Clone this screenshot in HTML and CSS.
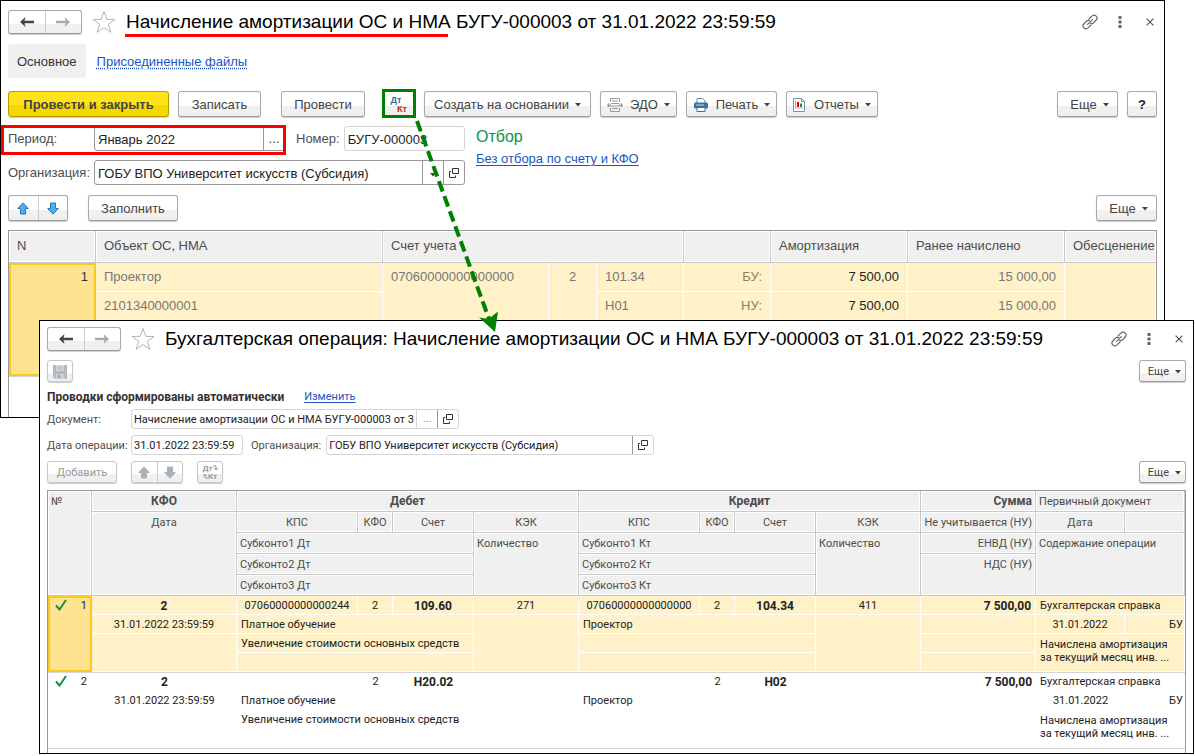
FILE: index.html
```html
<!DOCTYPE html>
<html lang="ru">
<head>
<meta charset="utf-8">
<title>Начисление амортизации ОС и НМА</title>
<link rel="stylesheet" href="styles.css">
</head>
<body>
<svg class="defs" aria-hidden="true">
  <symbol id="i-left" viewBox="0 0 14 10"><path d="M0 5 5.500 0 4.500 3.700H14V6.300H4.500L5.500 10Z" fill="currentColor"/></symbol>
  <symbol id="i-right" viewBox="0 0 14 10"><path d="M14 5 8.500 0 9.500 3.700H0V6.300H9.500L8.500 10Z" fill="currentColor"/></symbol>
  <symbol id="i-star" viewBox="0 0 24 24"><path d="M12 1.500 14.700 9.300 23 9.500 16.400 14.300 18.800 22.300 12 17.600 5.200 22.300 7.600 14.300 1 9.500 9.300 9.300Z" fill="#fff" stroke="#b4b4b4"/></symbol>
  <symbol id="i-link" viewBox="0 0 16 16"><g fill="none" stroke="#666" stroke-width="1.200" stroke-linecap="round"><path d="M7 5 10.200 1.900C12.800-.4 16.800 3.300 14.200 6L11.600 8.800C10.500 9.800 9.400 9.800 8.600 9.400"/><path d="M9 11 5.800 14.100C3.200 16.400-.8 12.700 1.800 10L4.400 7.200C5.500 6.200 6.600 6.200 7.400 6.600"/><path d="M5.600 10.400 10.400 5.600"/></g></symbol>
  <symbol id="i-dots" viewBox="0 0 4 12"><path d="M.5 0h3v3h-3zM.5 4.500h3v3h-3zM.5 9h3v3h-3z" fill="#666"/></symbol>
  <symbol id="i-close" viewBox="0 0 8 8"><path d="M.6.6 7.400 7.400M7.400.6.6 7.400" stroke="#555" stroke-width="1.200"/></symbol>
  <symbol id="i-up" viewBox="0 0 12 13"><path d="M6 .8 11.300 6.500H8.500V12H3.500V6.500H.7Z" fill="currentColor" stroke="var(--edge)"/></symbol>
  <symbol id="i-down" viewBox="0 0 12 13"><path d="M6 12.200 11.300 6.500H8.500V1H3.500V6.500H.7Z" fill="currentColor" stroke="var(--edge)"/></symbol>
  <symbol id="i-open" viewBox="0 0 10 10"><path d="M3.500.5h6v5h-6zM2 3.500H.5v6h6V7.500" fill="none" stroke="#333"/></symbol>
  <symbol id="i-caret" viewBox="0 0 6 4"><path d="M0 0h6L3 3.500Z" fill="#444"/></symbol>
  <symbol id="i-check" viewBox="0 0 12 12"><path d="M1 6.500 4.500 10.500 11 1" fill="none" stroke="#0a9646" stroke-width="2"/></symbol>
</svg>

<main class="desktop">
  <section class="window window-back">
    <header class="titlebar">
      <div class="group nav"><button aria-label="Назад"><svg class="arrow"><use href="#i-left"/></svg></button><button aria-label="Вперед" class="dim"><svg class="arrow"><use href="#i-right"/></svg></button></div>
      <svg class="star"><use href="#i-star"/></svg>
      <h1>Начисление амортизации ОС и НМА БУГУ-000003 от 31.01.2022 23:59:59</h1>
      <div class="wintools"><svg class="link-i"><use href="#i-link"/></svg><svg class="dots-i"><use href="#i-dots"/></svg><svg class="close-i"><use href="#i-close"/></svg></div>
    </header>
    <nav class="tabs"><span class="tab">Основное</span><a href="#files">Присоединенные файлы</a></nav>
    <div class="toolbar">
      <button class="btn primary">Провести и закрыть</button>
      <button class="btn w-write">Записать</button>
      <button class="btn w-post">Провести</button>
      <button class="btn dtkt"><span class="dt">Дт</span><span class="kt">Кт</span></button>
      <button class="btn w-create">Создать на основании <svg class="caret"><use href="#i-caret"/></svg></button>
      <button class="btn w-edo"><svg class="ico" viewBox="0 0 16 14"><path d="M3.500 4V.5h9V4M3.500 10v3.500h9V10M5 3h6M4 5.500h8M4 8h8M5 10.500h6" fill="none" stroke="#999"/><path d="M4 7H2V5L0 7.500 2 9V8h2M12 7h2V5l2 2.500L14 9V8h-2" fill="#999" stroke="#999" stroke-width=".5"/></svg>ЭДО <svg class="caret"><use href="#i-caret"/></svg></button>
      <button class="btn w-print"><svg class="ico" viewBox="0 0 16 14"><path d="M4 5V.5h5.500L12 3v2" fill="#fff" stroke="#6d89a5"/><rect x="1" y="4.500" width="14" height="6" rx="1.500" fill="#3e6f9e"/><path d="M4 9.500h8v4H4z" fill="#fff" stroke="#3e6f9e"/><path d="M3 7h8" stroke="#c9dcec"/></svg>Печать <svg class="caret"><use href="#i-caret"/></svg></button>
      <button class="btn w-report"><svg class="ico narrow" viewBox="0 0 12 14"><path d="M.5.5h8l3 3v10H.5z" fill="#fff" stroke="#7f8fa3"/><path d="M8.500.5v3h3" fill="none" stroke="#7f8fa3"/><path d="M2.500 3v7H10" fill="none" stroke="#aab"/><path d="M4 4h2v5H4z" fill="#f00000"/><path d="M7 5.500h2V9H7z" fill="#159a2c"/></svg>Отчеты <svg class="caret"><use href="#i-caret"/></svg></button>
      <button class="btn w-more push">Еще <svg class="caret"><use href="#i-caret"/></svg></button>
      <button class="btn w-help">?</button>
    </div>
    <div class="form">
      <div class="fields">
        <div class="line">
          <label class="lead" for="period">Период:</label>
          <div class="field f-period"><input id="period" value="Январь 2022"><button>...</button></div>
          <label class="second" for="number">Номер:</label>
          <div class="field soft f-number"><input id="number" value="БУГУ-000003"></div>
        </div>
        <div class="line">
          <label class="lead" for="org">Организация:</label>
          <div class="field f-org"><input id="org" value="ГОБУ ВПО Университет искусств (Субсидия)"><button aria-label="Выбрать"><svg class="caret"><use href="#i-caret"/></svg></button><button aria-label="Открыть"><svg class="open-i"><use href="#i-open"/></svg></button></div>
        </div>
      </div>
      <div class="filter"><h2>Отбор</h2><a href="#filter">Без отбора по счету и КФО</a></div>
    </div>
    <div class="toolbar lower">
      <div class="group move"><button aria-label="Вверх"><svg class="ud"><use href="#i-up"/></svg></button><button aria-label="Вниз"><svg class="ud"><use href="#i-down"/></svg></button></div>
      <button class="btn w-fill">Заполнить</button>
      <button class="btn w-more push">Еще <svg class="caret"><use href="#i-caret"/></svg></button>
    </div>
    <table class="assets">
      <colgroup><col class="a0"><col class="a2"><col class="a3"><col class="a4"><col class="a1"><col class="a1"><col class="a5"><col class="a6"><col></colgroup>
      <thead><tr><th>N</th><th>Объект ОС, НМА</th><th colspan="3">Счет учета</th><th></th><th>Амортизация</th><th>Ранее начислено</th><th>Обесценение</th></tr></thead>
      <tbody class="sel">
        <tr><td rowspan="3" class="cur r">1</td><td>Проектор</td><td rowspan="3">07060000000000000</td><td rowspan="3" class="c">2</td><td>101.34</td><td class="r unit">БУ:</td><td class="r dark">7 500,00</td><td class="r">15 000,00</td><td rowspan="3"></td></tr>
        <tr><td>2101340000001</td><td>Н01</td><td class="r unit">НУ:</td><td class="r dark">7 500,00</td><td class="r">15 000,00</td></tr>
        <tr class="tall"><td></td><td></td><td></td><td></td><td></td></tr>
      </tbody>
      <tbody class="rest"><tr><td colspan="9"></td></tr></tbody>
    </table>
  </section>

  <section class="window window-front">
    <header class="titlebar">
      <div class="group nav"><button aria-label="Назад"><svg class="arrow"><use href="#i-left"/></svg></button><button aria-label="Вперед" class="dim"><svg class="arrow"><use href="#i-right"/></svg></button></div>
      <svg class="star"><use href="#i-star"/></svg>
      <h1>Бухгалтерская операция: Начисление амортизации ОС и НМА БУГУ-000003 от 31.01.2022 23:59:59</h1>
      <div class="wintools"><svg class="link-i"><use href="#i-link"/></svg><svg class="dots-i"><use href="#i-dots"/></svg><svg class="close-i"><use href="#i-close"/></svg></div>
    </header>
    <div class="toolbar save-row">
      <button class="btn icon off" aria-label="Записать"><svg class="disk" viewBox="0 0 14 14"><path d="M0 0h14v14H2L0 12Z" fill="#b3bbc0"/><path d="M3 0h8v6H3z" fill="#d3d8db"/><path d="M4 2h6M4 4h6" stroke="#b3bbc0"/><path d="M3 9h8v5H3z" fill="#c9cfd2"/><path d="M5 10h2v3H5z" fill="#9aa4aa"/></svg></button>
      <button class="btn w-more push">Еще <svg class="caret"><use href="#i-caret"/></svg></button>
    </div>
    <p class="note"><b>Проводки сформированы автоматически</b><a href="#edit">Изменить</a></p>
    <div class="line">
      <label class="lead" for="doc">Документ:</label>
      <div class="field soft f-doc"><input id="doc" value="Начисление амортизации ОС и НМА БУГУ-000003 от 3"><button class="pale">...</button><button aria-label="Открыть"><svg class="open-i"><use href="#i-open"/></svg></button></div>
    </div>
    <div class="line">
      <label class="lead" for="date">Дата операции:</label>
      <div class="field soft f-date"><input id="date" value="31.01.2022 23:59:59"></div>
      <label class="second" for="org2">Организация:</label>
      <div class="field soft f-org2"><input id="org2" value="ГОБУ ВПО Университет искусств (Субсидия)"><button aria-label="Открыть"><svg class="open-i"><use href="#i-open"/></svg></button></div>
    </div>
    <div class="toolbar">
      <button class="btn w-add off">Добавить</button>
      <div class="group move off"><button aria-label="Вверх"><svg class="ud"><use href="#i-up"/></svg></button><button aria-label="Вниз"><svg class="ud"><use href="#i-down"/></svg></button></div>
      <button class="btn icon dtkt off"><span class="dt">Дт<svg viewBox="0 0 5 6"><path d="M0 1h3v3M1 3l2 2 2-2" fill="none" stroke="#999"/></svg></span><span class="kt"><svg viewBox="0 0 5 6"><path d="M5 5H2V2M0 3l2-2 2 2" fill="none" stroke="#999"/></svg>Кт</span></button>
      <button class="btn w-more push">Еще <svg class="caret"><use href="#i-caret"/></svg></button>
    </div>
    <table class="entries">
      <colgroup><col class="e1"><col class="e2"><col class="e3"><col class="e4"><col class="e5"><col class="e6"><col class="e3"><col class="e4"><col class="e5"><col class="e6"><col class="e7"><col class="e8"><col></colgroup>
      <thead>
        <tr><th rowspan="5" class="l">№</th><th class="strong">КФО</th><th colspan="4" class="strong">Дебет</th><th colspan="4" class="strong">Кредит</th><th class="strong r">Сумма</th><th colspan="2" class="l">Первичный документ</th></tr>
        <tr><th rowspan="4">Дата</th><th>КПС</th><th>КФО</th><th>Счет</th><th>КЭК</th><th>КПС</th><th>КФО</th><th>Счет</th><th>КЭК</th><th class="r">Не учитывается (НУ)</th><th>Дата</th><th></th></tr>
        <tr><th colspan="3" class="l">Субконто1 Дт</th><th rowspan="3" class="l">Количество</th><th colspan="3" class="l">Субконто1 Кт</th><th rowspan="3" class="l">Количество</th><th class="r">ЕНВД (НУ)</th><th rowspan="3" colspan="2" class="l">Содержание операции</th></tr>
        <tr><th colspan="3" class="l">Субконто2 Дт</th><th colspan="3" class="l">Субконто2 Кт</th><th rowspan="2" class="r">НДС (НУ)</th></tr>
        <tr><th colspan="3" class="l">Субконто3 Дт</th><th colspan="3" class="l">Субконто3 Кт</th></tr>
      </thead>
      <tbody class="sel">
        <tr><td rowspan="4" class="cur"><div class="mark"><svg><use href="#i-check"/></svg>1</div></td><td class="c strong">2</td><td class="c">07060000000000244</td><td class="c">2</td><td class="c strong">109.60</td><td class="c">271</td><td class="c">07060000000000000</td><td class="c">2</td><td class="c strong">104.34</td><td class="c">411</td><td class="r strong">7 500,00</td><td colspan="2">Бухгалтерская справка</td></tr>
        <tr><td class="c">31.01.2022 23:59:59</td><td colspan="3">Платное обучение</td><td rowspan="3"></td><td colspan="3">Проектор</td><td rowspan="3"></td><td></td><td class="c">31.01.2022</td><td class="number">БУ</td></tr>
        <tr><td rowspan="2"></td><td colspan="3">Увеличение стоимости основных средств</td><td colspan="3"></td><td></td><td rowspan="2" colspan="2" class="text">Начислена амортизация<br>за текущий месяц инв. ...</td></tr>
        <tr><td colspan="3"></td><td colspan="3"></td><td></td></tr>
      </tbody>
      <tbody class="plain">
        <tr><td rowspan="4" class="num"><div class="mark"><svg><use href="#i-check"/></svg>2</div></td><td class="c strong">2</td><td></td><td class="c">2</td><td class="c strong">Н20.02</td><td></td><td></td><td class="c">2</td><td class="c strong">Н02</td><td></td><td class="r strong">7 500,00</td><td colspan="2">Бухгалтерская справка</td></tr>
        <tr><td class="c">31.01.2022 23:59:59</td><td colspan="3">Платное обучение</td><td rowspan="3"></td><td colspan="3">Проектор</td><td rowspan="3"></td><td></td><td class="c">31.01.2022</td><td class="number">БУ</td></tr>
        <tr><td rowspan="2"></td><td colspan="3">Увеличение стоимости основных средств</td><td colspan="3"></td><td></td><td rowspan="2" colspan="2" class="text">Начислена амортизация<br>за текущий месяц инв. ...</td></tr>
        <tr><td colspan="3"></td><td colspan="3"></td><td></td></tr>
      </tbody>
      <tbody class="rest"><tr><td colspan="13"></td></tr></tbody>
    </table>
  </section>

  <svg class="callouts" aria-hidden="true">
    <path d="M125 35.500H448" stroke="#f00" stroke-width="3"/>
    <rect x="2.500" y="126.500" width="282" height="27" fill="none" stroke="#f00" stroke-width="3"/>
    <rect x="383.500" y="90.500" width="31" height="26" fill="none" stroke="#008000" stroke-width="3"/>
    <path d="M417 121 489 319" stroke="#008000" stroke-width="4" stroke-dasharray="11 5"/>
    <path d="M495 332 479 317.500 488.500 319 498 311.500Z" fill="#008000"/>
  </svg>
</main>
</body>
</html>
```

FILE: styles.css
```css
* { box-sizing: border-box; }
body { margin: 0; background: #fff; color: #333; font: 13px/16px "Liberation Sans", Arial, sans-serif; }
button, input { font: inherit; color: inherit; }
button { padding: 0; white-space: nowrap; }
h1, h2, p { margin: 0; font-weight: 400; }
a { color: #1c55c0; text-underline-offset: 2px; white-space: nowrap; }
label { color: #4d4d4d; white-space: nowrap; }
.defs { position: absolute; width: 0; height: 0; }
.desktop { position: relative; min-height: 756px; overflow: hidden; }
.window { position: absolute; background: #fff; border: 1px solid #000; display: flex; flex-direction: column; overflow: hidden; }
.window-back { top: 0; left: 0; right: 30px; padding: 8px 7px 0; }
.window-front { top: 320px; left: 39px; right: 1px; padding: 5px 7px 0; font-size: 11px; line-height: 14px; font-family: Roboto, sans-serif; }
.callouts { position: absolute; inset: 0; width: 100%; height: 100%; pointer-events: none; }

.titlebar { display: flex; align-items: center; height: 25px; }
h1 { font: 19px/24px "Liberation Sans", Arial, sans-serif; color: #000; white-space: nowrap; }
.star { width: 24px; height: 24px; margin: 0 10px; }
.wintools { display: flex; align-items: center; margin-left: auto; padding-right: 3px; }
.link-i { width: 16px; height: 16px; }
.dots-i { width: 4px; height: 12px; margin: 0 24px 0 20px; }
.close-i { width: 8px; height: 8px; }

.btn, .group { border: 1px solid #aaa; border-bottom-color: #999; border-radius: 3px; background: linear-gradient(#fff 0 60%, #f0f0f0 60%); box-shadow: 0 1px 1px #ccc; }
.btn { display: flex; align-items: center; justify-content: center; height: 26px; padding-top: 1px; color: #444; }
.group { display: flex; height: 26px; width: 60px; }
.group button { flex: 1; display: flex; align-items: center; justify-content: center; border: 0; background: none; }
.group button + button { border-left: 1px solid #ccc; }
.group.nav { width: 74px; height: 24px; color: #444; }
.nav .dim { color: #aaa; }
.arrow { width: 14px; height: 10px; }
.ud { width: 12px; height: 13px; }
.move { color: #4aaef0; --edge: #2f78b7; }
.caret { width: 6px; height: 4px; margin-left: 6px; }
.ico { width: 16px; height: 14px; margin-right: 7px; }
.ico.narrow { width: 12px; margin-right: 9px; }

.tabs { display: flex; align-items: center; gap: 11px; margin-top: 10px; }
.tab { padding: 10px 9px 8px; background: #f0f0f0; border-radius: 3px; line-height: 16px; }
.tabs a { padding-top: 2px; text-decoration-style: dotted; }
.toolbar { display: flex; gap: 9px; margin-top: 13px; }
.push { margin-left: auto; }
.primary { width: 161px; font-weight: 700; background: linear-gradient(#ffe31a 0 55%, #f5d800 55%); border-color: #b39b00; }
.w-write { width: 83px; }
.w-post { width: 84px; margin-left: 11px; }
.w-create { width: 167px; }
.w-edo { width: 77px; }
.w-print { width: 91px; }
.w-report { width: 92px; }
.w-more { width: 61px; padding-left: 4px; }
.w-help { width: 30px; font-weight: 700; color: #222; }
.w-fill { width: 90px; }
.dtkt { width: 32px; margin-left: 9px; flex-direction: column; font-size: 9px; line-height: 9px; font-weight: 700; }
.dt { color: #2f6f9f; padding-right: 6px; }
.kt { color: #c02a10; padding-left: 6px; }

.form { display: flex; gap: 11px; margin-top: 9px; }
.fields, .filter { display: flex; flex-direction: column; }
.fields { gap: 9px; width: 457px; }
.line { display: flex; align-items: center; }
.lead { flex: none; width: 86px; padding-top: 1px; }
.second { margin: 0 4px 0 11px; padding-top: 1px; }
.field { display: flex; height: 25px; border: 1px solid #999; border-radius: 3px; background: #fff; overflow: hidden; }
.field input { flex: 1; min-width: 0; border: 0; padding: 2px 0 0 3px; background: none; color: #222; }
.field button { width: 21px; border: 0; border-left: 1px solid #999; background: none; }
.field button .caret { margin: 0; }
.soft { border-color: #d5d5d5; }
.field .pale { border-color: #d5d5d5; color: #888; }
.open-i { width: 10px; height: 10px; vertical-align: middle; }
.f-period { width: 191px; }
.f-number { flex: 1; }
.f-org { flex: 1; }
.filter { gap: 5px; padding-top: 2px; }
.filter h2 { font-size: 16px; line-height: 18px; color: #0a9646; }
.lower { margin-top: 10px; }
.lower .w-fill { margin-left: 11px; }

table { border-collapse: separate; border-spacing: 0; table-layout: fixed; width: 100%; border: 1px solid #999; border-bottom: 0; }
th, td { padding: 0 8px; font-weight: 400; text-align: left; vertical-align: top; white-space: nowrap; overflow: hidden; }
th { background: #f0f0f0; color: #4d4d4d; border-right: 1px solid #c8c8c8; border-bottom: 1px solid #c8c8c8; box-shadow: inset 0 0 0 1px #fff; }
.c { text-align: center; }
.r { text-align: right; }
.strong { font-size: 12px; font-weight: 700; }
.sel td { background: #fff1c8; border-right: 1px solid #fff; border-bottom: 1px solid #fff; }
.sel td.cur { background: #fee391; border: 2px solid #fac81e; }
.assets { margin-top: 9px; }
.assets th { height: 32px; padding-top: 7px; }
.assets th:last-child { padding-right: 0; border-right: 0; }
.assets td { height: 29px; padding-top: 6px; color: #777; }
.assets .cur { color: #333; padding: 4px 6px 0 0; }
.assets .dark { color: #222; }
.assets .unit { color: #8b8060; }
.assets .tall td { height: 55px; }
.assets .rest td { height: 41px; border-top: 1px solid #d5d5d5; }
.a0 { width: 87px; }
.a1 { width: 87px; }
.a2 { width: 287px; }
.a3 { width: 166px; }
.a4 { width: 48px; }
.a5 { width: 137px; }
.a6 { width: 157px; }

.window-front .toolbar { margin-top: 6px; }
.window-front .save-row { margin-top: 9px; }
.window-front .btn, .window-front .move { height: 22px; }
.window-front .w-more { width: 47px; }
.window-front .icon { width: 26px; }
.window-front .w-add { width: 70px; }
.window-front .move { width: 52px; margin-left: 5px; }
.window-front .off { color: #999; border-color: #c8c8c8; }
.window-front .move.off { color: #a9b2b8; --edge: #a9b2b8; }
.window-front .dtkt { margin-left: 5px; font-size: 8px; line-height: 8px; }
.window-front .dt, .window-front .kt { color: #999; padding: 0; }
.dtkt svg { width: 5px; height: 6px; }
.disk { width: 14px; height: 14px; }
.note { display: flex; gap: 20px; margin: 8px 0 5px; }
.note b { font-size: 12px; }
.window-front .field { height: 20px; }
.window-front .field input { padding: 1px 0 0 2px; }
.window-front .lead { width: 84px; }
.window-front .second { margin: 0 5px 0 8px; }
.window-front .line + .line { margin-top: 6px; }
.f-doc { width: 328px; }
.f-date { width: 112px; }
.f-org2 { width: 328px; }
.entries { margin-top: 7px; }
.entries th { height: 21px; padding: 4px 3px 0; text-align: center; }
.entries th.strong { padding-top: 3px; }
.entries th.l { text-align: left; }
.entries th.r { text-align: right; }
.entries td { height: 19px; padding: 3px 4px 0; color: #222; }
.entries .num { padding: 2px 5px 0 7px; }
.entries .cur { padding: 1px 3px 0 5px; }
.entries .text { line-height: 13px; padding-top: 4px; }
.entries .number { padding: 3px 0 0 44px; }
.mark { display: flex; justify-content: space-between; }
.mark svg { width: 12px; height: 12px; }
.entries .rest td { height: 5px; padding: 0; border-top: 1px solid #d5d5d5; }
.entries .plain tr:first-child td { padding-top: 2px; border-top: 1px solid #d5d5d5; }
.e1 { width: 44px; }
.e2 { width: 145px; }
.e3 { width: 121px; }
.e4 { width: 35px; }
.e5 { width: 81px; }
.e6 { width: 105px; }
.e7 { width: 115px; }
.e8 { width: 89px; }
```
